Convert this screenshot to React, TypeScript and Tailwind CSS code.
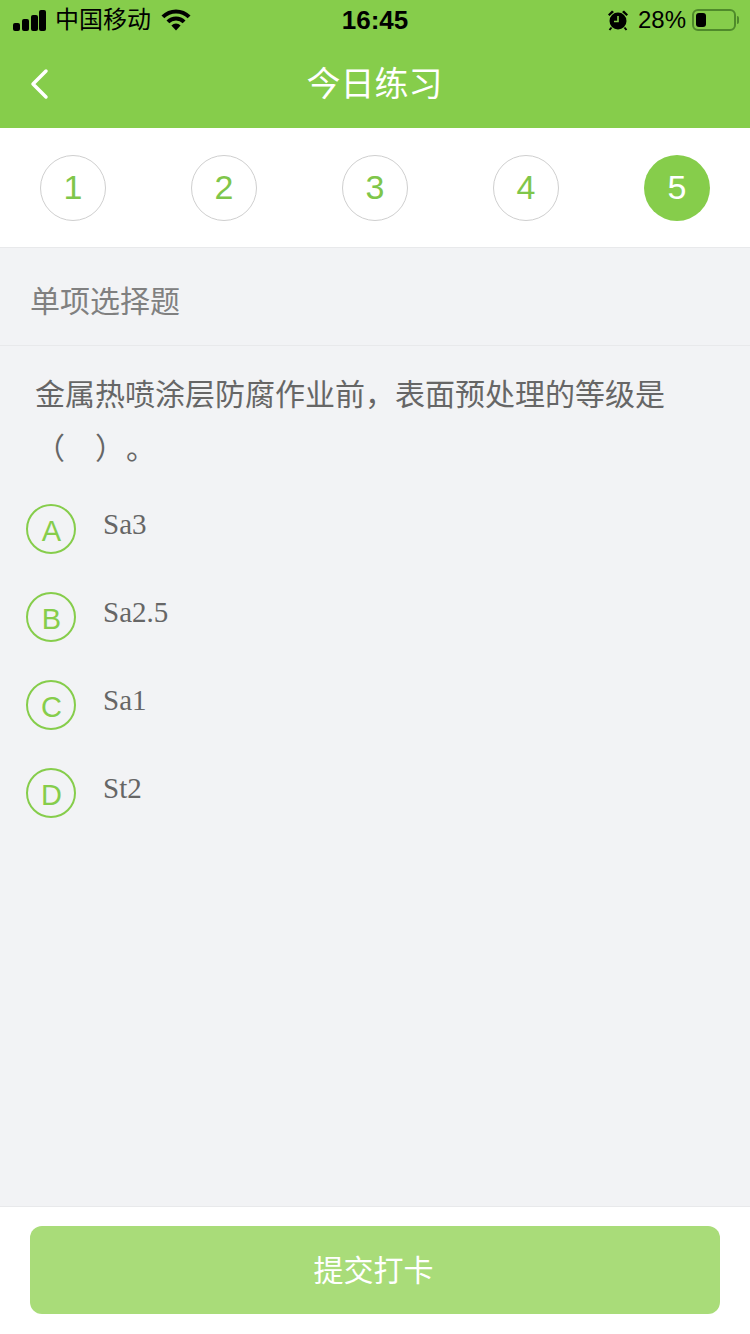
const SANS = "font-['Liberation_Sans','Noto_Sans_CJK_SC',sans-serif]";

const STEPS = [1, 2, 3, 4, 5];
const OPTIONS = [
  { key: "A", text: "Sa3" },
  { key: "B", text: "Sa2.5" },
  { key: "C", text: "Sa1" },
  { key: "D", text: "St2" },
];

function StatusBar() {
  return (
    <div className="relative flex h-10 items-center justify-between pl-[13px] pr-[11px] text-black">
      <div className="flex items-center">
        <svg width="33" height="21" viewBox="0 0 33 21" fill="currentColor">
          <rect x="0" y="13" width="7" height="8" rx="2" />
          <rect x="9" y="9" width="7" height="12" rx="2" />
          <rect x="18" y="5" width="7" height="16" rx="2" />
          <rect x="26" y="0" width="7" height="21" rx="2" />
        </svg>
        <span className="ml-[9px] text-[24px] leading-none">中国移动</span>
        <svg className="ml-[10px]" width="30" height="22" viewBox="0 0 30 22" fill="none">
          <path d="M1.9 7.9a18.500 18.500 0 0 1 26.200 0" stroke="currentColor" strokeWidth="4" />
          <path d="M6.900 12.900a11.500 11.500 0 0 1 16.200 0" stroke="currentColor" strokeWidth="4" />
          <path d="M15 21.500 10.400 16.400a6.500 6.500 0 0 1 9.200 0z" fill="currentColor" />
        </svg>
      </div>
      <span className="absolute left-0 right-0 text-center text-[26px] font-bold leading-none">16:45</span>
      <div className="flex items-center">
        <svg width="22" height="22" viewBox="0 0 22 22" fill="currentColor">
          <circle cx="11" cy="12" r="8.500" />
          <path d="M1 5.500 5 1.500l2 1.500-4.500 4zM21 5.500l-4-4-2 1.500 4.500 4z" />
          <path d="M4.500 18.500 2.500 21M17.500 18.500l2 2.500" stroke="currentColor" strokeWidth="2" />
          <path d="M11 7v5.500H7" fill="none" stroke="#86cd4b" strokeWidth="1.600" />
        </svg>
        <span className="ml-[9px] text-[24px] leading-none">28%</span>
        <div className="ml-[6px] flex h-[22px] w-[44px] items-center rounded-[6px] border-2 border-[#4f8a2b] p-[2px]">
          <div className="h-full w-[10px] rounded-[3px] bg-black" />
        </div>
        <div className="ml-px h-2 w-[2px] rounded-r-sm bg-[#4f8a2b]" />
      </div>
    </div>
  );
}

function NavBar() {
  return (
    <div className="relative flex h-[88px] items-center justify-center">
      <svg className="absolute left-[28px] top-[27px]" width="22" height="34" viewBox="0 0 22 34" fill="none">
        <path d="M18 4 5 17l13 13" stroke="#fff" strokeWidth="3.500" strokeLinecap="round" strokeLinejoin="round" />
      </svg>
      <h1 className="pr-px text-[34px] font-normal leading-none text-white">今日练习</h1>
    </div>
  );
}

export default function App() {
  return (
    <div className={`${SANS} flex h-[1334px] w-[750px] flex-col bg-[#f2f3f5]`}>
      <header className="bg-[#86cd4b]">
        <StatusBar />
        <NavBar />
      </header>

      <div className="flex h-[120px] items-center justify-between border-b border-[#e8e9eb] bg-white px-[40px]">
        {STEPS.map((n) =>
          n === 5 ? (
            <div key={n} className="flex h-[66px] w-[66px] items-center justify-center rounded-full bg-[#86cd4b] text-[34px] text-white">
              {n}
            </div>
          ) : (
            <div key={n} className="flex h-[66px] w-[66px] items-center justify-center rounded-full border border-[#cfcfcf] text-[34px] text-[#7fc64a]">
              {n}
            </div>
          ),
        )}
      </div>

      <div className="flex h-[98px] items-center border-b border-[#e8e9eb] pl-[30px] pt-[10px] text-[30px] text-[#808080]">
        单项选择题
      </div>

      <p className="mt-[22px] px-[35px] text-[30px] leading-[54px] text-[#666666]">
        金属热喷涂层防腐作业前，表面预处理的等级是
        <br />
        （<span className="inline-block w-[30px]" />）<span className="ml-[16px]">。</span>
      </p>

      <ul className="mt-[28px] flex flex-col gap-[38px] pl-[26px]">
        {OPTIONS.map((o) => (
          <li key={o.key} className="flex h-[50px] items-start">
            <span className="flex h-[50px] w-[50px] items-center justify-center rounded-full border-2 border-[#86cd4b] pl-px pt-[5px] text-[29px] text-[#86cd4b]">
              {o.key}
            </span>
            <span className="ml-[27px] font-['Liberation_Serif',serif] text-[29px] leading-[40px] text-[#666666]">
              {o.text}
            </span>
          </li>
        ))}
      </ul>

      <footer className="mt-auto flex h-[128px] items-start border-t border-[#e8e9eb] bg-white px-[30px] pt-[19px]">
        <button className="flex h-[88px] w-full items-center justify-center rounded-[12px] bg-[#a9dc79] pr-[3px] text-[30px] text-white">
          提交打卡
        </button>
      </footer>
    </div>
  );
}
